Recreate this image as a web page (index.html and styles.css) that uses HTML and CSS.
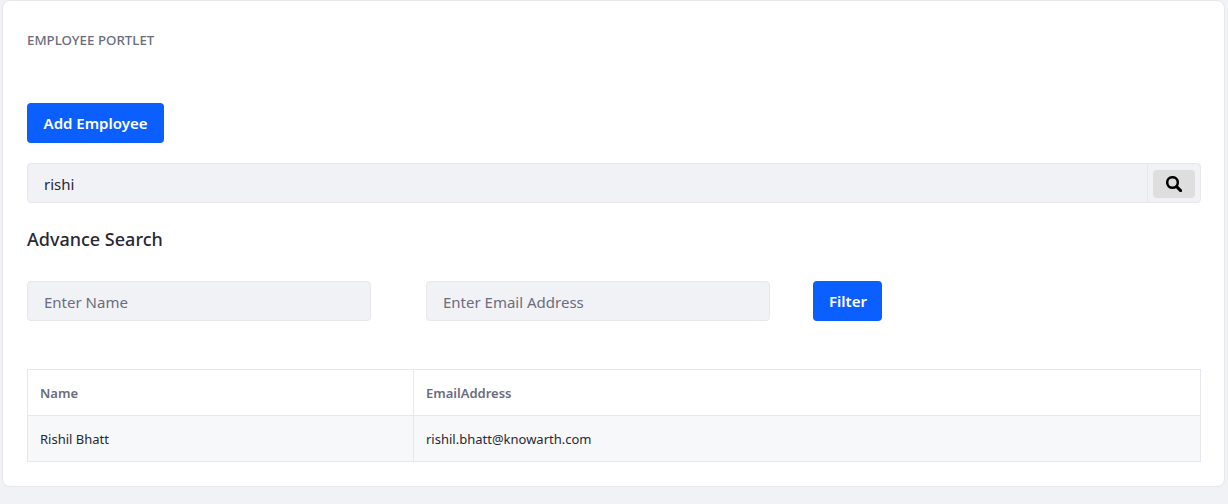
FILE: index.html
```html
<!DOCTYPE html>
<html lang="en">
<head>
<meta charset="utf-8">
<title>Employee Portlet</title>
<link rel="stylesheet" href="styles.css">
</head>
<body>
<main class="card">
  <h2 class="title">EMPLOYEE PORTLET</h2>
  <button class="btn add-btn" type="button">Add Employee</button>
  <div class="search">
    <input class="search-input" type="text" value="rishi">
    <div class="search-append">
      <button class="search-btn" type="button" aria-label="Search">
        <svg class="search-icon" viewBox="0 0 16 16" width="16" height="16">
          <circle cx="6.5" cy="6.5" r="5.3" fill="none" stroke="#000" stroke-width="2.5"/>
          <path d="M10.6 10.6 L14.6 14.6" fill="none" stroke="#000" stroke-width="3" stroke-linecap="round"/>
        </svg>
      </button>
    </div>
  </div>
  <h3 class="subtitle">Advance Search</h3>
  <div class="filters">
    <input class="field field-name" type="text" placeholder="Enter Name">
    <input class="field field-email" type="text" placeholder="Enter Email Address">
    <button class="btn filter-btn" type="button">Filter</button>
  </div>
  <table class="table">
    <thead>
      <tr><th class="col-name">Name</th><th>EmailAddress</th></tr>
    </thead>
    <tbody>
      <tr><td>Rishil Bhatt</td><td>rishil.bhatt@knowarth.com</td></tr>
    </tbody>
  </table>
</main>
</body>
</html>
```
FILE: styles.css
```css
* { box-sizing: border-box; }
html, body { margin: 0; height: 100%; }
body {
  background: #f1f2f5;
  font-family: "Noto Sans", "Open Sans", sans-serif;
  color: #272833;
  padding: 0 3px 0 2px;
}
.card {
  height: 487px;
  background: #fff;
  border: 1px solid #e7e7ed;
  border-radius: 8px;
  padding: 31px 23px 0 24px;
}
.title {
  margin: 0 0 54px;
  font-size: 13.3px;
  line-height: 17px;
  font-weight: 500;
  color: #6b6c7e;
}
.btn {
  display: block;
  height: 40px;
  border: 0;
  border-radius: 4px;
  background: #0b5fff;
  color: #fff;
  font: 600 15px/20px "Noto Sans", sans-serif;
  padding: 0 16px;
}
.add-btn { width: 137px; }
.search {
  display: flex;
  height: 40px;
  margin-top: 20px;
  background: #f1f2f5;
  border: 1px solid #e7e7ed;
  border-radius: 4px;
}
.search-input {
  flex: 1;
  min-width: 0;
  border: 0;
  background: transparent;
  padding: 2px 16px 0;
  font: 400 15px "Noto Sans", sans-serif;
  color: #272833;
  outline: none;
}
.search-append {
  width: 53px;
  padding-top: 2px;
  border-left: 1px solid #e7e7ed;
  display: flex;
  align-items: center;
  justify-content: center;
}
.search-btn {
  display: flex;
  align-items: center;
  justify-content: center;
  width: 42px;
  height: 28px;
  padding: 0;
  border: 0;
  border-radius: 4px;
  background: #dedede;
}
.subtitle {
  margin: 24px 0 30px;
  font-size: 18px;
  line-height: 24px;
  font-weight: 500;
  color: #272833;
}
.filters { display: flex; align-items: center; }
.field {
  width: 344px;
  height: 40px;
  background: #f1f2f5;
  border: 1px solid #e7e7ed;
  border-radius: 4px;
  padding: 2px 16px 0;
  font: 400 15px "Noto Sans", sans-serif;
  color: #272833;
  outline: none;
}
.field::placeholder { color: #6b6c7e; opacity: 1; }
.field-email { margin-left: 55px; }
.filter-btn { margin-left: 43px; width: 69px; }
.table {
  width: 100%;
  margin-top: 48px;
  border-collapse: collapse;
  table-layout: fixed;
  font-size: 13px;
}
.table th, .table td {
  height: 46px;
  padding: 1px 12px 0;
  border: 1px solid #e7e7ed;
  text-align: left;
}
.table th { font-weight: 600; color: #6b6c7e; background: #fff; }
.table td { background: #f7f8f9; color: #272833; }
.col-name { width: 386px; }
```
